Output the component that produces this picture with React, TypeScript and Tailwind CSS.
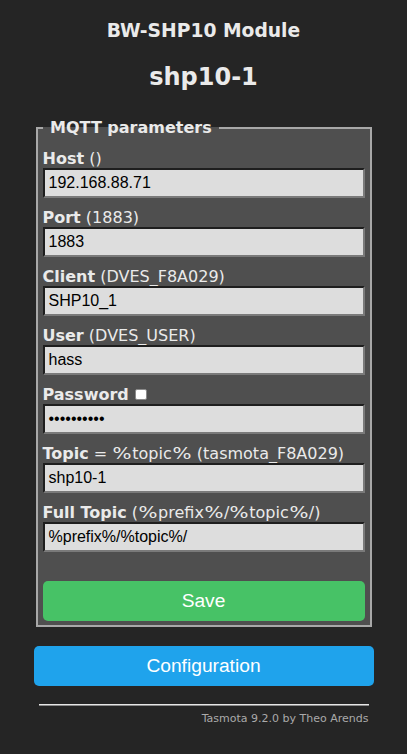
import React from 'react';

const fields = [
  { name: 'Host', hint: ' ()', value: '192.168.88.71' },
  { name: 'Port', hint: ' (1883)', value: '1883' },
  { name: 'Client', hint: ' (DVES_F8A029)', value: 'SHP10_1' },
  { name: 'User', hint: ' (DVES_USER)', value: 'hass' },
  { name: 'Password', hint: '', value: '••••••••••', check: true },
  { name: 'Topic', hint: ' = %topic% (tasmota_F8A029)', value: 'shp10-1' },
  { name: 'Full Topic', hint: ' (%prefix%/%topic%/)', value: '%prefix%/%topic%/' },
];

// Verdana draws "%" much wider than DejaVu, so widen each one
const Hint = ({ text }: { text: string }) => {
  const parts = text.split('%');
  return (
    <span className="whitespace-pre">
      {parts.map((p, i) => (
        <React.Fragment key={i}>
          {p}
          {i < parts.length - 1 && (
            <span className="inline-block w-[20px] text-center scale-x-[1.25]">%</span>
          )}
        </React.Fragment>
      ))}
    </span>
  );
};

const App = () => {
  return (
    <div className="min-h-screen bg-[#252525] text-[#eaeaea] font-['DejaVu_Sans',Verdana,sans-serif]">
      <div className="w-[340px] mx-auto">
        {/* Header */}
        <h3 className="pt-[20px] text-center text-[18.72px] leading-[22px] font-bold">BW-SHP10 Module</h3>
        <h2 className="mt-[21px] text-center text-[24px] leading-[28px] font-bold">shp10-1</h2>

        {/* MQTT form */}
        <fieldset className="mt-[27px] mx-[2px] border-2 border-[#a8a8a8] bg-[#4f4f4f] px-[5px] pt-[12px] pb-[4px]">
          <legend className="px-[2px] text-[16px] leading-[19px] font-bold">&nbsp;MQTT parameters&nbsp;</legend>
          <div className="flex flex-col gap-[10px]">
            {fields.map((f) => (
              <div key={f.name} className="flex flex-col">
                <div className="text-[16px] leading-[19px] flex items-center">
                  <b>{f.name}</b>
                  <Hint text={f.hint} />
                  {f.check && (
                    <span className="ml-[6px] inline-block w-[12px] h-[11px] bg-white rounded-[2px] border border-[#8a8a8a]" />
                  )}
                </div>
                <div className="h-[30px] bg-[#dddddd] border-2 border-t-[#1e1e1e] border-l-[#1e1e1e] border-b-[#7a7a7a] border-r-[#7a7a7a] px-[4px] flex items-center text-black text-[16px] font-['Liberation_Sans',Arial,sans-serif]">
                  {f.value}
                </div>
              </div>
            ))}
          </div>
          <button className="mt-[29px] w-full h-[40px] rounded-[5px] bg-[#47c266] text-white text-[19.2px] font-['Liberation_Sans',Arial,sans-serif]">
            Save
          </button>
        </fieldset>

        <button className="mt-[19px] w-full h-[40px] rounded-[5px] bg-[#1fa3ec] text-white text-[19.2px] font-['Liberation_Sans',Arial,sans-serif]">
          Configuration
        </button>

        {/* Footer */}
        <div className="mx-[5px] mt-[18px] text-right">
          <div className="border-t border-t-[#e6e6e6] border-b border-b-[#8a8a8a]" />
          <div className="mt-[6px] text-[11px] leading-[13px] text-[#aaaaaa]">Tasmota 9.2.0 by Theo Arends</div>
        </div>
      </div>
    </div>
  );
};

export default App;
